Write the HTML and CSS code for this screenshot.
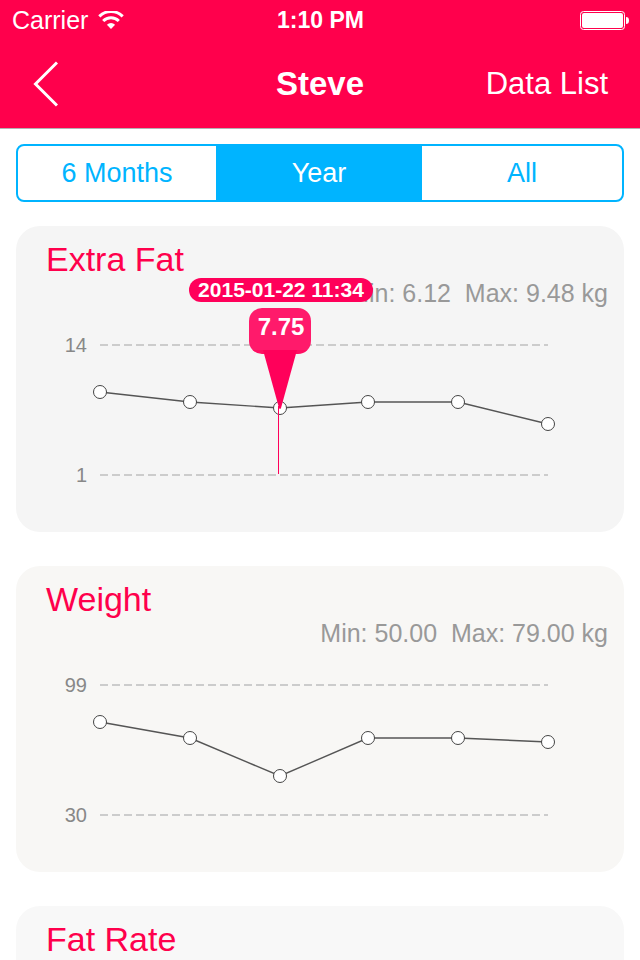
FILE: index.html
```
<!DOCTYPE html>
<html lang="en">
<head>
    <meta charset="UTF-8">
    <meta name="viewport" content="width=device-width, initial-scale=1.0">
    <title>Steve</title>
    <link rel="stylesheet" href="styles.css">
</head>
<body>

    <header class="header">
        <div class="status-bar">
            <div class="carrier">
                <span>Carrier</span>
                <svg width="26" height="18" viewBox="0 0 26 18" aria-hidden="true">
                    <path d="M1.3 5.4 A16.5 16.5 0 0 1 24.7 5.4" fill="none" stroke="#fff" stroke-width="3"/>
                    <path d="M5.2 10 A10.9 10.9 0 0 1 20.8 10" fill="none" stroke="#fff" stroke-width="3"/>
                    <path d="M8.9 13.7 A6 6 0 0 1 17.1 13.7 L13 18 Z" fill="#fff"/>
                </svg>
            </div>
            <div class="time">1:10 PM</div>
            <div class="battery">
                <svg width="49" height="19" viewBox="0 0 49 19" aria-hidden="true">
                    <rect x="0.5" y="0.5" width="44" height="18" rx="3" fill="none" stroke="#fff"/>
                    <rect x="2" y="2" width="41" height="15" rx="2" fill="#fff"/>
                    <path d="M46 6 C48 6 49 7 49 9.5 C49 12 48 13 46 13 Z" fill="#fff"/>
                </svg>
            </div>
        </div>
        <nav class="nav-bar">
            <button type="button" class="back-btn" aria-label="Back">
                <svg width="26" height="46" viewBox="0 0 26 46" aria-hidden="true">
                    <path d="M25 1.5 L3.5 23 L25 44.5" fill="none" stroke="#fff" stroke-width="3"/>
                </svg>
            </button>
            <h1 class="nav-title">Steve</h1>
            <a href="#" class="nav-link">Data List</a>
        </nav>
    </header>

    <main class="content">
        <div class="segments">
            <button type="button" class="segment">6 Months</button>
            <button type="button" class="segment active" aria-pressed="true">Year</button>
            <button type="button" class="segment">All</button>
        </div>

        <section class="card">
            <h2 class="card-title">Extra Fat</h2>
            <p class="card-range">Min: 6.12&nbsp; Max: 9.48 kg</p>
            <svg class="chart" viewBox="0 84 608 222">
                <clipPath id="bubbleClip">
                    <rect x="233" y="82" width="62" height="46" rx="13"/>
                </clipPath>
                <text class="axis-label" x="71" y="126">14</text>
                <text class="axis-label" x="71" y="256">1</text>
                <path class="grid-line" d="M84 119 H532 M84 249 H532"/>
                <polyline class="data-line" points="84,166 174,176 264,182 352,176 442,176 532,198"/>
                <g class="points">
                    <circle cx="84" cy="166" r="6.5"/>
                    <circle cx="174" cy="176" r="6.5"/>
                    <circle cx="264" cy="182" r="6.5"/>
                    <circle cx="352" cy="176" r="6.5"/>
                    <circle cx="442" cy="176" r="6.5"/>
                    <circle cx="532" cy="198" r="6.5"/>
                </g>
                <!-- selected value -->
                <g class="marker">
                    <rect x="262" y="180" width="1" height="68"/>
                    <rect x="173" y="52" width="184" height="24" rx="12"/>
                    <g clip-path="url(#bubbleClip)">
                        <rect class="bubble" x="233" y="82" width="62" height="42"/>
                        <rect class="bubble-edge" x="233" y="124" width="62" height="4"/>
                    </g>
                    <path d="M247 124 H281 L265 182 Q264 184 263 182 Z"/>
                    <text class="marker-date" x="265" y="71">2015-01-22 11:34</text>
                    <text class="marker-value" x="265" y="109">7.75</text>
                </g>
            </svg>
        </section>

        <section class="card card-warm">
            <h2 class="card-title">Weight</h2>
            <p class="card-range">Min: 50.00&nbsp; Max: 79.00 kg</p>
            <svg class="chart" viewBox="0 84 608 222">
                <text class="axis-label" x="71" y="126">99</text>
                <text class="axis-label" x="71" y="256">30</text>
                <path class="grid-line" d="M84 119 H532 M84 249 H532"/>
                <polyline class="data-line" points="84,156 174,172 264,210 352,172 442,172 532,176"/>
                <g class="points">
                    <circle cx="84" cy="156" r="6.5"/>
                    <circle cx="174" cy="172" r="6.5"/>
                    <circle cx="264" cy="210" r="6.5"/>
                    <circle cx="352" cy="172" r="6.5"/>
                    <circle cx="442" cy="172" r="6.5"/>
                    <circle cx="532" cy="176" r="6.5"/>
                </g>
            </svg>
        </section>

        <section class="card card-light">
            <h2 class="card-title">Fat Rate</h2>
        </section>
    </main>

</body>
</html>
```
FILE: styles.css
```
* {
    box-sizing: border-box;
}

body {
    display: flex;
    flex-direction: column;
    height: 100vh;
    margin: 0;
    overflow: hidden;
    background: #fff;
    font-family: "Liberation Sans", Arial, sans-serif;
}

button {
    padding: 0;
    border: 0;
    background: none;
    font-family: inherit;
    cursor: pointer;
}

.header {
    flex: none;
    border-bottom: 1px solid #b2b2b2;
    background: #ff004c;
    color: #fff;
}

.status-bar {
    display: grid;
    grid-template-columns: 1fr auto 1fr;
    align-items: center;
    height: 40px;
    padding: 0 11px 0 12px;
}

.carrier {
    display: flex;
    align-items: center;
    gap: 10px;
    font-size: 25px;
}

.time {
    font-size: 23px;
    font-weight: bold;
}

.battery {
    display: flex;
    justify-content: flex-end;
}

.nav-bar {
    display: grid;
    grid-template-columns: 1fr auto 1fr;
    align-items: center;
    height: 88px;
    padding: 0 32px;
}

.back-btn {
    justify-self: start;
    height: 46px;
}

.nav-title {
    margin: 0;
    font-size: 33px;
}

.nav-link {
    justify-self: end;
    color: #fff;
    font-size: 31px;
    text-decoration: none;
}

.content {
    flex: 1;
    min-height: 0;
    padding: 15px 16px;
    overflow-y: auto;
    scrollbar-width: none;
}

.segments {
    display: grid;
    grid-template-columns: 99fr 103fr 100fr;
    height: 58px;
    margin-bottom: 24px;
    overflow: hidden;
    border: 2px solid #00b4ff;
    border-radius: 8px;
}

.segment {
    color: #00b4ff;
    font-size: 27px;
}

.segment.active {
    background: #00b4ff;
    color: #fff;
}

.card {
    min-height: 306px;
    margin-bottom: 34px;
    padding-top: 16px;
    border-radius: 24px;
    background: #f5f5f5;
}

.card-warm {
    background: #f8f7f5;
}

.card-light {
    background: #f8f8f8;
}

.card-title {
    margin: 0;
    padding: 0 30px;
    color: #ff004c;
    font-size: 34px;
    font-weight: normal;
    line-height: 34px;
}

.card-range {
    margin: 0;
    padding: 0 16px;
    color: #999;
    font-size: 25px;
    line-height: 34px;
    text-align: right;
}

/* positioned so the marker covers the range text */
.chart {
    position: relative;
    display: block;
    width: 100%;
    overflow: visible;
}

.axis-label {
    fill: #888;
    font-size: 20px;
    text-anchor: end;
}

.grid-line {
    stroke: #ccc;
    stroke-width: 2;
    stroke-dasharray: 8 4;
}

.data-line {
    fill: none;
    stroke: #555;
    stroke-width: 1.4;
}

.points {
    fill: #fff;
    stroke: #444;
}

.marker {
    fill: #ff005a;
}

.marker .bubble {
    fill: #ff1a6b;
}

.marker .bubble-edge {
    fill: #ff0d62;
}

.marker text {
    fill: #fff;
    font-weight: bold;
    text-anchor: middle;
}

.marker-date {
    font-size: 21px;
}

.marker-value {
    font-size: 24px;
}
```
